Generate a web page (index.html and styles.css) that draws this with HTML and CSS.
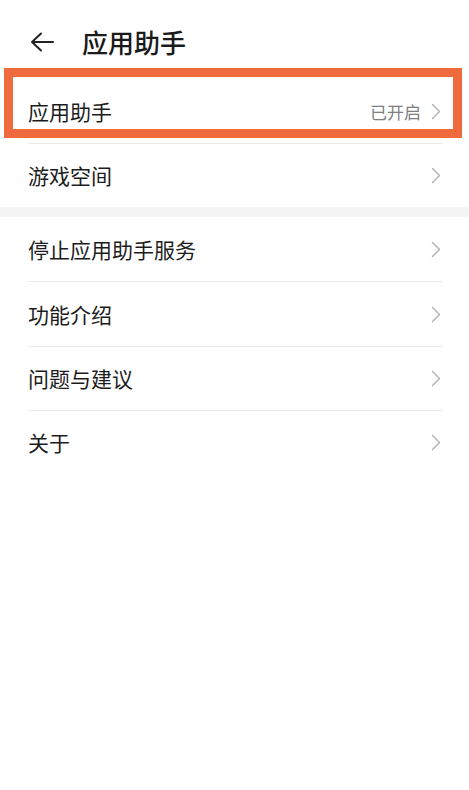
FILE: index.html
```html
<!DOCTYPE html>
<html lang="zh-CN">
<head>
<meta charset="utf-8">
<title>应用助手</title>
<link rel="stylesheet" href="styles.css">
</head>
<body>
<div class="page">
  <header class="header">
    <svg class="back" width="24" height="20" viewBox="0 0 24 20"><path d="M23 10H2M11 1.5L2 10l9 8.5" fill="none" stroke="#222" stroke-width="2" stroke-linecap="round" stroke-linejoin="round"/></svg>
    <h1 class="title">应用助手</h1>
  </header>
  <section class="group group-first">
    <div class="row row-short"><span class="label">应用助手</span><span class="right"><span class="value">已开启</span><svg class="chev" width="10" height="17" viewBox="0 0 10 17"><path d="M1.5 1.5l7 7-7 7" fill="none" stroke="#b5b5b5" stroke-width="1.5" stroke-linecap="round" stroke-linejoin="round"/></svg></span></div>
    <div class="row row-short"><span class="label">游戏空间</span><span class="right"><svg class="chev" width="10" height="17" viewBox="0 0 10 17"><path d="M1.5 1.5l7 7-7 7" fill="none" stroke="#b5b5b5" stroke-width="1.5" stroke-linecap="round" stroke-linejoin="round"/></svg></span></div>
  </section>
  <div class="band"></div>
  <section class="group">
    <div class="row"><span class="label">停止应用助手服务</span><span class="right"><svg class="chev" width="10" height="17" viewBox="0 0 10 17"><path d="M1.5 1.5l7 7-7 7" fill="none" stroke="#b5b5b5" stroke-width="1.5" stroke-linecap="round" stroke-linejoin="round"/></svg></span></div>
    <div class="row"><span class="label">功能介绍</span><span class="right"><svg class="chev" width="10" height="17" viewBox="0 0 10 17"><path d="M1.5 1.5l7 7-7 7" fill="none" stroke="#b5b5b5" stroke-width="1.5" stroke-linecap="round" stroke-linejoin="round"/></svg></span></div>
    <div class="row row-short"><span class="label">问题与建议</span><span class="right"><svg class="chev" width="10" height="17" viewBox="0 0 10 17"><path d="M1.5 1.5l7 7-7 7" fill="none" stroke="#b5b5b5" stroke-width="1.5" stroke-linecap="round" stroke-linejoin="round"/></svg></span></div>
    <div class="row row-short row-last"><span class="label">关于</span><span class="right"><svg class="chev" width="10" height="17" viewBox="0 0 10 17"><path d="M1.5 1.5l7 7-7 7" fill="none" stroke="#b5b5b5" stroke-width="1.5" stroke-linecap="round" stroke-linejoin="round"/></svg></span></div>
  </section>
  <div class="highlight"></div>
</div>
</body>
</html>
```

FILE: styles.css
```css
html, body {
  margin: 0;
  padding: 0;
  background: #ffffff;
}
body {
  font-family: "Noto Sans CJK SC", "Noto Sans", sans-serif;
  color: #1c1c1c;
}
.page {
  position: relative;
  width: 469px;
  height: 790px;
  overflow: hidden;
}
.header {
  box-sizing: border-box;
  height: 80px;
  padding: 4px 0 0 30px;
  display: flex;
  align-items: center;
}
.back {
  display: block;
  flex: none;
}
.title {
  margin: 0 0 0 28px;
  font-size: 26px;
  font-weight: 500;
  line-height: 1;
  color: #1a1a1a;
}
.group {
  padding: 0 26px 0 28px;
}
.row {
  height: 64px;
  display: flex;
  align-items: center;
  justify-content: space-between;
  border-bottom: 1px solid #ebebeb;
}
.row-short {
  height: 63px;
}
.group-first .row-short:last-child,
.row-last {
  border-bottom: none;
}
.label {
  font-size: 21px;
  line-height: 1;
}
.right {
  display: flex;
  align-items: center;
  gap: 10px;
}
.value {
  font-size: 17px;
  color: #7f7f7f;
  line-height: 1;
}
.chev {
  display: block;
  margin-right: 2px;
}
.band {
  height: 10px;
  background: #f4f4f4;
}
.highlight {
  position: absolute;
  left: 4px;
  top: 68px;
  width: 458px;
  height: 70px;
  box-sizing: border-box;
  border: 9px solid #ef6b3d;
}
```
